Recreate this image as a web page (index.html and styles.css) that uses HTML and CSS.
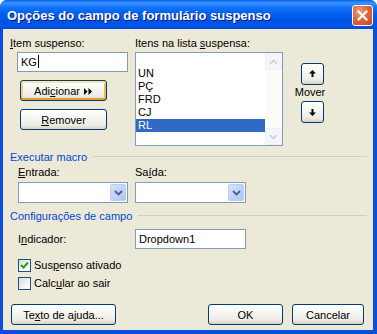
FILE: index.html
```html
<!DOCTYPE html>
<html lang="pt-BR">
<head>
  <meta charset="UTF-8" />
  <title>Opções do campo de formulário suspenso</title>
  <link rel="stylesheet" href="styles.css">
</head>
<body>
  <div class="window">
    <div class="titlebar">
      <span class="title">Opções do campo de formulário suspenso</span>
      <span class="close">
        <svg width="11" height="11" viewBox="0 0 11 11"><path d="M1.5 1.5 L9.5 9.5 M9.5 1.5 L1.5 9.5" stroke="#fff" stroke-width="2.2" stroke-linecap="square"/></svg>
      </span>
    </div>

    <div class="client">
      <div class="top">
        <div class="col-item">
          <div class="lbl"><u>I</u>tem suspenso:</div>
          <div class="textbox item-input">KG<span class="caret"></span></div>
          <button class="btn hot add"><span>Adi<u>c</u>ionar</span>
            <svg width="10" height="7" viewBox="0 0 10 7"><path d="M1 0 L4.5 3.5 L1 7 Z M5.5 0 L9 3.5 L5.5 7 Z" fill="#000"/></svg>
          </button>
          <button class="btn remove"><span><u>R</u>emover</span></button>
        </div>

        <div class="col-list">
          <div class="lbl">Itens na lista <u>s</u>uspensa:</div>
          <div class="listbox">
            <div class="items">
              <div class="row"></div>
              <div class="row">UN</div>
              <div class="row">PÇ</div>
              <div class="row">FRD</div>
              <div class="row">CJ</div>
              <div class="row selected">RL</div>
            </div>
            <div class="scrollbar">
              <span class="sb-btn">
                <svg width="9" height="6" viewBox="0 0 9 6"><path d="M1 5 L4.5 1.5 L8 5" fill="none" stroke="#c6cfe3" stroke-width="1.6"/></svg>
              </span>
              <span class="sb-btn">
                <svg width="9" height="6" viewBox="0 0 9 6"><path d="M1 1 L4.5 4.5 L8 1" fill="none" stroke="#c6cfe3" stroke-width="1.6"/></svg>
              </span>
            </div>
          </div>
        </div>

        <div class="col-move">
          <button class="btn arrow">
            <svg width="7" height="8" viewBox="0 0 7 8"><path d="M3.5 0 L7 3.5 L4.5 3.5 L4.5 7 L2.5 7 L2.5 3.5 L0 3.5 Z" fill="#000"/></svg>
          </button>
          <div class="move-lbl">Mover</div>
          <button class="btn arrow">
            <svg width="7" height="8" viewBox="0 0 7 8"><path d="M3.5 8 L7 4.5 L4.5 4.5 L4.5 1 L2.5 1 L2.5 4.5 L0 4.5 Z" fill="#000"/></svg>
          </button>
        </div>
      </div>

      <div class="group-head"><span>Executar macro</span><span class="rule"></span></div>
      <div class="macro">
        <div class="macro-col">
          <div class="lbl"><u>E</u>ntrada:</div>
          <div class="combo">
            <span class="combo-btn">
              <svg width="9" height="6" viewBox="0 0 9 6"><path d="M1 1 L4.5 4.5 L8 1" fill="none" stroke="#4d6185" stroke-width="1.8"/></svg>
            </span>
          </div>
        </div>
        <div class="macro-col">
          <div class="lbl">Sa<u>í</u>da:</div>
          <div class="combo wide">
            <span class="combo-btn">
              <svg width="9" height="6" viewBox="0 0 9 6"><path d="M1 1 L4.5 4.5 L8 1" fill="none" stroke="#4d6185" stroke-width="1.8"/></svg>
            </span>
          </div>
        </div>
      </div>

      <div class="group-head second"><span>Configurações de campo</span><span class="rule"></span></div>
      <div class="bookmark">
        <span class="lbl bm-lbl">I<u>n</u>dicador:</span>
        <div class="textbox bm-input">Dropdown1</div>
      </div>

      <div class="check first">
        <span class="box">
          <svg width="9" height="9" viewBox="0 0 9 9"><path d="M1 4 L3.5 6.5 L8 1.5" fill="none" stroke="#21a121" stroke-width="2"/></svg>
        </span>
        <span>Sus<u>p</u>enso ativado</span>
      </div>
      <div class="check">
        <span class="box"></span>
        <span>Calc<u>u</u>lar ao sair</span>
      </div>

      <div class="footer">
        <button class="btn help"><span>Te<u>x</u>to de ajuda...</span></button>
        <span class="spacer"></span>
        <button class="btn ok"><span>OK</span></button>
        <button class="btn cancel"><span>Cancelar</span></button>
      </div>
    </div>
  </div>
</body>
</html>
```

FILE: styles.css
```css
* {
  box-sizing: border-box;
}

body {
  margin: 0;
  background: #fff;
  font-family: "Liberation Sans", Arial, sans-serif;
  font-size: 11px;
  color: #000;
}

u {
  text-decoration: underline;
  text-underline-offset: 1px;
}

.window {
  width: 377px;
  height: 334px;
  background: #0a4ddf;
  border-radius: 7px 7px 0 0;
  display: flex;
  flex-direction: column;
  overflow: hidden;
}

.titlebar {
  height: 29px;
  flex: none;
  display: flex;
  align-items: center;
  padding: 0 4px 0 7px;
  background: linear-gradient(#0a5fe8 0, #3d95ff 3px, #1275fb 7px, #0461f0 13px, #0054e3 21px, #0156e9 26px, #0348d8 29px);
}

.title {
  flex: 1;
  color: #fff;
  font-weight: bold;
  font-size: 13px;
  text-shadow: 1px 1px #0a1883;
  margin-top: 1px;
}

.close {
  width: 21px;
  height: 21px;
  border: 1px solid #fff;
  border-radius: 3px;
  background: radial-gradient(circle at 35% 30%, #f0a080 0, #e0673f 45%, #c9401e 100%);
  display: flex;
  align-items: center;
  justify-content: center;
  margin-top: 2px;
}

.client {
  flex: 1;
  margin: 0 4px 4px 3px;
  background: #ece9d8;
  padding: 8px 6px 0 7px;
}

.lbl {
  line-height: 13px;
  height: 13px;
  white-space: nowrap;
}

.top {
  display: flex;
}

.col-item {
  width: 125px;
  flex: none;
}

.textbox {
  background: #fff;
  border: 1px solid #7f9db9;
  height: 20px;
  line-height: 18px;
  padding: 0 3px;
}

.item-input {
  margin: 2px 0 0 7px;
  width: 111px;
}

.caret {
  display: inline-block;
  width: 1px;
  height: 13px;
  background: #000;
  vertical-align: -2px;
  margin-left: 1px;
}

.btn {
  font-family: "Liberation Sans", Arial, sans-serif;
  font-size: 11px;
  color: #000;
  border: 1px solid #003c74;
  border-radius: 3px;
  background: linear-gradient(#ffffff 0, #f7f7f3 40%, #ecebe4 80%, #d6d0c5 100%);
  height: 21px;
  padding: 0;
  display: flex;
  align-items: center;
  justify-content: center;
  gap: 3px;
  white-space: nowrap;
}

.btn.hot {
  box-shadow: inset 0 2px #ffe7a2, inset 0 -2px #e69a2a, inset 2px 0 #fbd27b, inset -2px 0 #f5bb4e;
}

.add {
  margin: 8px 0 0 10px;
  width: 87px;
}

.add svg {
  margin-top: 1px;
}

.remove {
  margin: 8px 0 0 10px;
  width: 87px;
}

.col-list {
  width: 148px;
  flex: none;
}

.listbox {
  margin-top: 2px;
  height: 94px;
  border: 1px solid #7f9db9;
  background: #fff;
  display: flex;
}

.items {
  flex: 1;
  padding-top: 1px;
}

.row {
  height: 13px;
  line-height: 13px;
  padding-left: 2px;
}

.row.selected {
  background: #316ac5;
  color: #fff;
}

.scrollbar {
  width: 17px;
  flex: none;
  background: #fbfbf8;
  display: flex;
  flex-direction: column;
  justify-content: space-between;
}

.sb-btn {
  height: 17px;
  border: 1px solid #eef0f7;
  border-radius: 2px;
  background: #f5f6fa;
  display: flex;
  align-items: center;
  justify-content: center;
}

.col-move {
  margin-left: 13px;
  width: 28px;
  display: flex;
  flex-direction: column;
  align-items: center;
  padding-top: 26px;
}

.btn.arrow {
  width: 23px;
  height: 22px;
  margin-left: 4px;
}

.move-lbl {
  line-height: 13px;
  margin: 1px 0 2px;
}

.group-head {
  display: flex;
  align-items: center;
  margin-top: 4px;
  height: 13px;
  color: #0046d5;
  font-size: 11px;
}

.group-head.second {
  margin-top: 6px;
}

.rule {
  flex: 1;
  height: 1px;
  background: #d0d0bf;
  margin-left: 6px;
}

.macro {
  display: flex;
  gap: 7px;
  padding-left: 8px;
  margin-top: 3px;
}

.combo {
  margin-top: 3px;
  width: 110px;
  height: 21px;
  border: 1px solid #7f9db9;
  background: #fff;
  display: flex;
  justify-content: flex-end;
  padding: 1px;
}

.combo.wide {
  width: 111px;
}

.combo-btn {
  width: 16px;
  border: 1px solid #bbcdf3;
  border-radius: 2px;
  background: linear-gradient(135deg, #d8e4fc 0, #c1d3fb 50%, #b0c5f4 100%);
  display: flex;
  align-items: center;
  justify-content: center;
}

.bookmark {
  display: flex;
  align-items: center;
  margin-top: 7px;
  padding-left: 8px;
}

.bm-lbl {
  width: 117px;
}

.bm-input {
  width: 111px;
}

.check {
  display: flex;
  align-items: center;
  gap: 3px;
  height: 13px;
  line-height: 13px;
  margin-top: 5px;
  padding-left: 8px;
}

.check.first {
  margin-top: 10px;
}

.box {
  width: 13px;
  height: 13px;
  border: 1px solid #1c5180;
  background: linear-gradient(135deg, #dcdcd7 0, #f4f4f0 60%, #ffffff 100%);
  display: flex;
  align-items: center;
  justify-content: center;
}

.footer {
  display: flex;
  margin-top: 14px;
  padding: 0 3px 0 1px;
  gap: 9px;
}

.spacer {
  flex: 1;
}

.help {
  width: 105px;
}

.ok {
  width: 75px;
}

.cancel {
  width: 72px;
}
```
